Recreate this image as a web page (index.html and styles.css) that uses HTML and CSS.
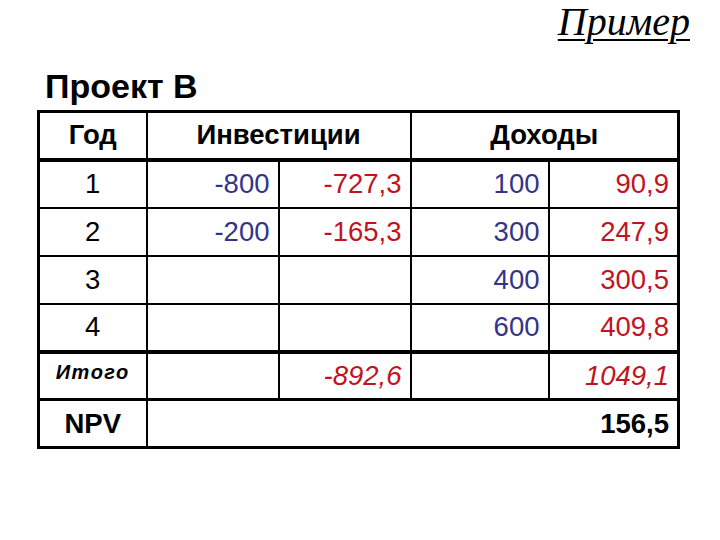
FILE: index.html
```html
<!DOCTYPE html>
<html lang="ru">
<head>
<meta charset="utf-8">
<title>Пример</title>
<link rel="stylesheet" href="styles.css">
</head>
<body>
<div class="page">
  <div class="topbar"><span class="example">Пример</span></div>
  <h1 class="title">Проект В</h1>
  <table class="grid">
    <colgroup>
      <col class="c1"><col class="c2"><col class="c3"><col class="c4"><col class="c5">
    </colgroup>
    <tr class="head">
      <th>Год</th>
      <th colspan="2">Инвестиции</th>
      <th colspan="2">Доходы</th>
    </tr>
    <tr>
      <td class="year">1</td>
      <td class="num blue">-800</td>
      <td class="num red">-727,3</td>
      <td class="num blue">100</td>
      <td class="num red">90,9</td>
    </tr>
    <tr>
      <td class="year">2</td>
      <td class="num blue">-200</td>
      <td class="num red">-165,3</td>
      <td class="num blue">300</td>
      <td class="num red">247,9</td>
    </tr>
    <tr>
      <td class="year">3</td>
      <td class="num"></td>
      <td class="num"></td>
      <td class="num blue">400</td>
      <td class="num red">300,5</td>
    </tr>
    <tr>
      <td class="year">4</td>
      <td class="num"></td>
      <td class="num"></td>
      <td class="num blue">600</td>
      <td class="num red">409,8</td>
    </tr>
    <tr class="total">
      <td class="label-total">Итого</td>
      <td class="num"></td>
      <td class="num red ital">-892,6</td>
      <td class="num"></td>
      <td class="num red ital">1049,1</td>
    </tr>
    <tr class="npv">
      <td class="label-npv">NPV</td>
      <td class="num bold" colspan="4">156,5</td>
    </tr>
  </table>
</div>
</body>
</html>
```

FILE: styles.css
```css
html, body {
  margin: 0;
  padding: 0;
  background: #ffffff;
}

.page {
  width: 720px;
  height: 540px;
  font-family: "Liberation Sans", Arial, sans-serif;
  color: #000;
}

.topbar {
  display: flex;
  justify-content: flex-end;
  height: 62px;
  padding-right: 30px;
}

.example {
  font-family: "Liberation Serif", "Times New Roman", serif;
  font-style: italic;
  font-size: 40px;
  line-height: 44px;
  text-decoration: underline;
  text-decoration-thickness: 2px;
  text-underline-offset: 4px;
}

.title {
  margin: 0 0 0 45px;
  font-size: 34px;
  font-weight: bold;
  line-height: 48px;
  height: 48px;
}

.grid {
  margin-left: 37px;
  border-collapse: collapse;
  table-layout: fixed;
  width: 640px;
  border: 3px solid #000;
  font-size: 27.5px;
}

.c1 { width: 108px; }
.c2 { width: 132px; }
.c3 { width: 132px; }
.c4 { width: 138px; }
.c5 { width: 130px; }

.grid tr {
  height: 48px;
}

.grid th,
.grid td {
  border: 2px solid #000;
  padding: 0;
  vertical-align: middle;
}

.grid th {
  font-weight: bold;
  text-align: center;
  border-bottom-width: 4px;
}

.head th {
  border-top-width: 3px;
}

.year {
  text-align: center;
}

.num {
  text-align: right;
  padding-right: 8px !important;
}

.blue { color: #33338a; }
.red { color: #c0141e; }
.ital { font-style: italic; }
.bold { font-weight: bold; color: #000; }

.total td {
  border-top-width: 4px;
}

.npv td {
  border-top-width: 3px;
  border-bottom-width: 3px;
}

.label-total {
  text-align: center;
  font-size: 20px;
  font-weight: bold;
  font-style: italic;
  letter-spacing: 1.5px;
  vertical-align: middle;
  padding-bottom: 6px !important;
}

.label-npv {
  text-align: center;
  font-weight: bold;
}
```
